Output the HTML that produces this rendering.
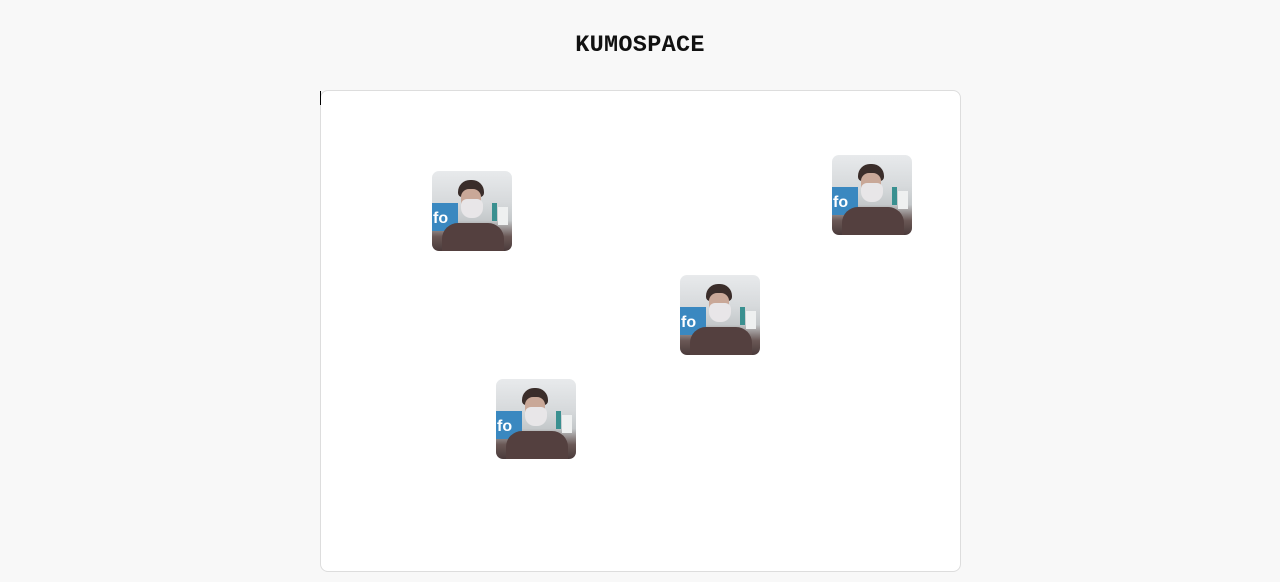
<!DOCTYPE html>
<html><head><style>
body{margin:0;background:#f8f8f8;width:1280px;height:582px;overflow:hidden;position:relative;font-family:"Liberation Mono",monospace}
h1{position:absolute;top:32px;left:0;width:1280px;text-align:center;margin:0;font-size:23.5px;font-weight:bold;color:#111;letter-spacing:0.3px}
.box{position:absolute;left:320px;top:90px;width:639px;height:480px;background:#fff;border:1px solid #ddd;border-radius:8px}
.cur{position:absolute;left:320px;top:91px;width:1px;height:14px;background:#000}
.t{position:absolute;width:80px;height:80px;border-radius:7px;overflow:hidden;background:linear-gradient(#e8eaec,#d6d9db 40%,#c4c8ca 62%,#6a5856 82%,#4a3a3a)}
.t div{position:absolute}
.sign{left:0;top:32px;width:26px;height:28px;background:#3a88c0}
.sign::after{content:"fo";position:absolute;left:1px;top:7px;color:#fff;font:bold 16px "Liberation Sans",sans-serif}
.hair{left:26px;top:9px;width:26px;height:17px;border-radius:12px 12px 4px 4px;background:#3a2d2a}
.face{left:29px;top:18px;width:20px;height:22px;border-radius:8px;background:#c9a898}
.mask{left:29px;top:28px;width:22px;height:19px;border-radius:6px 6px 10px 10px;background:#e8e6e8}
.body{left:10px;top:52px;width:62px;height:30px;border-radius:16px 16px 0 0;background:#54403f}
.lt{left:66px;top:36px;width:10px;height:18px;background:#eef0f0}
.tl{left:60px;top:32px;width:5px;height:18px;background:#3a9090}
</style></head><body>
<h1>KUMOSPACE</h1>
<div class="box"></div><div class="cur"></div>
<div class="t" style="left:432px;top:171px"><div class="sign"></div><div class="tl"></div><div class="lt"></div><div class="body"></div><div class="hair"></div><div class="face"></div><div class="mask"></div></div>
<div class="t" style="left:832px;top:155px"><div class="sign"></div><div class="tl"></div><div class="lt"></div><div class="body"></div><div class="hair"></div><div class="face"></div><div class="mask"></div></div>
<div class="t" style="left:680px;top:275px"><div class="sign"></div><div class="tl"></div><div class="lt"></div><div class="body"></div><div class="hair"></div><div class="face"></div><div class="mask"></div></div>
<div class="t" style="left:496px;top:379px"><div class="sign"></div><div class="tl"></div><div class="lt"></div><div class="body"></div><div class="hair"></div><div class="face"></div><div class="mask"></div></div>
</body></html>
